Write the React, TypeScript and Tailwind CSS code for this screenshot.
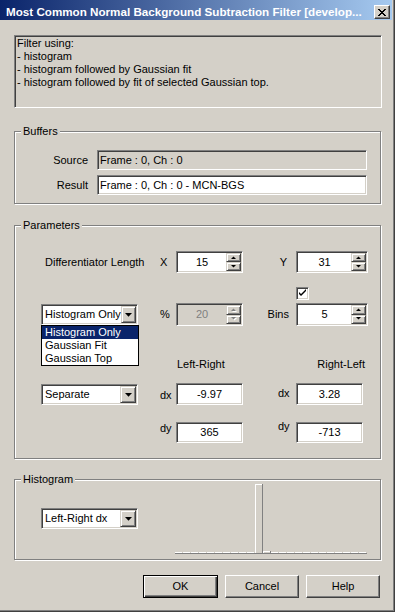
import React from "react";

const sunken =
  "border border-t-[#808080] border-l-[#808080] border-b-white border-r-white shadow-[inset_1px_1px_0_#404040,inset_-1px_-1px_0_#d4d0c8] p-[1px]";
const raisedBtn =
  "border border-t-white border-l-white border-b-[#404040] border-r-[#404040] shadow-[inset_-1px_-1px_0_#808080] bg-[#d4d0c8]";
const raisedSmall =
  "border border-t-[#d4d0c8] border-l-[#d4d0c8] border-b-[#404040] border-r-[#404040] shadow-[inset_1px_1px_0_#fff,inset_-1px_-1px_0_#808080] bg-[#d4d0c8]";

function Tri({ up, disabled }: { up?: boolean; disabled?: boolean }) {
  const d = up ? "M0 3 L5 3 L2.5 0.5 Z" : "M0 0 L5 0 L2.5 2.5 Z";
  return (
    <svg width="6" height="4" viewBox="0 0 6 4" className="block">
      {disabled && <path d={d} transform="translate(1 1)" fill="#ffffff" />}
      <path d={d} fill={disabled ? "#808080" : "#000000"} />
    </svg>
  );
}

function Spin({
  value,
  w,
  h,
  disabled,
}: {
  value: string;
  w: string;
  h: string;
  disabled?: boolean;
}) {
  return (
    <div className={`flex ${w} ${h} ${sunken} ${disabled ? "bg-[#d4d0c8]" : "bg-white"}`}>
      <div className={`flex flex-1 items-center justify-center ${disabled ? "text-[#808080]" : "text-black"}`}>
        {value}
      </div>
      <div className="flex w-[15px] flex-col">
        <div className={`flex flex-1 items-center justify-center ${raisedSmall}`}>
          <Tri up disabled={disabled} />
        </div>
        <div className={`flex flex-1 items-center justify-center ${raisedSmall}`}>
          <Tri disabled={disabled} />
        </div>
      </div>
    </div>
  );
}

function Edit({ value, h }: { value: string; h: string }) {
  return (
    <div className={`flex w-[67px] ${h} items-center justify-center bg-white ${sunken}`}>{value}</div>
  );
}

function Combo({ value }: { value: string }) {
  return (
    <div className={`flex h-[21px] w-[97px] bg-white ${sunken}`}>
      <div className="flex flex-1 items-center pl-[2px] whitespace-nowrap">{value}</div>
      <div className={`flex w-[16px] items-center justify-center ${raisedSmall}`}>
        <svg width="7" height="4" viewBox="0 0 7 4" className="block">
          <path d="M0 0 H7 L3.5 3.8 Z" fill="#000" />
        </svg>
      </div>
    </div>
  );
}

function Group({
  label,
  className,
  children,
}: {
  label: string;
  className: string;
  children?: React.ReactNode;
}) {
  return (
    <div
      className={`relative ml-[14px] w-[367px] shrink-0 border border-[#808080] shadow-[1px_1px_0_#fff,inset_1px_1px_0_#fff] ${className}`}
    >
      <span className="absolute left-[6px] top-[-7px] bg-[#d4d0c8] px-[2px] leading-[13px]">{label}</span>
      {children}
    </div>
  );
}

function Checkbox() {
  return (
    <div className={`h-[13px] w-[13px] bg-white ${sunken}`}>
      <svg width="9" height="9" viewBox="0 0 9 9" className="block">
        <path d="M1 3 V5 L3 7 L8 2 V0 L3 5 Z" fill="#000" />
      </svg>
    </div>
  );
}

function Chart() {
  const base = 69;
  const bars = Array.from({ length: 24 }, (_, i) => i);
  return (
    <svg width="193" height="71" viewBox="0 0 193 71" className="block" shapeRendering="crispEdges">
      {bars.map((i) => {
        const x0 = i * 8;
        const hgt = i === 10 ? 69 : i === 11 ? 2 : 0;
        const top = base - hgt;
        return (
          <g key={i}>
            <rect x={x0} y={hgt > 0 ? top : base - 1} width={7} height={1} fill="#ffffff" />
            {hgt > 0 && <rect x={x0} y={top} width={1} height={hgt} fill="#ffffff" />}
            {hgt > 0 && <rect x={x0 + 7} y={top} width={1} height={hgt + 1} fill="#808080" />}
          </g>
        );
      })}
      <rect x={0} y={base} width={192} height={1} fill="#808080" />
    </svg>
  );
}

export default function App() {
  return (
    <div className="flex h-[612px] w-[395px] flex-col overflow-hidden border-b border-r border-[#404040] bg-[#d4d0c8] font-['Liberation_Sans',Arial,sans-serif] text-[11px] leading-[13px] text-black shadow-[inset_-1px_-1px_0_#808080]">
      {/* Title bar */}
      <div className="flex h-[20px] w-[392px] shrink-0 items-start bg-[linear-gradient(to_right,#0a246a,#a6caf0)]">
        <div className="pl-[6px] pt-[5px] text-[11.65px] font-bold leading-[13px] whitespace-nowrap text-white">
          Most Common Normal Background Subtraction Filter [develop...
        </div>
        <div
          className={`ml-auto mr-[2px] mt-[5px] flex h-[14px] w-[16px] shrink-0 items-center justify-center ${raisedBtn}`}
        >
          <svg width="8" height="7" viewBox="0 0 8 7" className="block" shapeRendering="crispEdges">
            <path
              d="M0 0h2v1h-2zM6 0h2v1h-2zM1 1h2v1h-2zM5 1h2v1h-2zM2 2h4v1h-4zM3 3h2v1h-2zM2 4h4v1h-4zM1 5h2v1h-2zM5 5h2v1h-2zM0 6h2v1h-2zM6 6h2v1h-2z"
              fill="#000"
            />
          </svg>
        </div>
      </div>

      {/* Description */}
      <div className={`ml-[14px] mt-[15px] h-[73px] w-[368px] shrink-0 bg-[#d4d0c8] ${sunken}`}>
        <div className="pl-[1px] leading-[13px]">
          <div>Filter using:</div>
          <div>- histogram</div>
          <div>- histogram followed by Gaussian fit</div>
          <div>- histogram followed by fit of selected Gaussian top.</div>
        </div>
      </div>

      {/* Buffers */}
      <Group label="Buffers" className="mt-[23px] h-[73px]">
        <div className="mt-[18px] flex h-[20px] items-center">
          <div className="w-[74px] pr-[1px] text-right">Source</div>
          <div className={`ml-[8px] flex h-[20px] w-[270px] items-center bg-[#d4d0c8] pl-[2px] ${sunken}`}>
            Frame : 0, Ch : 0
          </div>
        </div>
        <div className="mt-[5px] flex h-[20px] items-center">
          <div className="w-[74px] pr-[1px] text-right">Result</div>
          <div className={`ml-[8px] flex h-[20px] w-[270px] items-center bg-white pl-[2px] ${sunken}`}>
            Frame : 0, Ch : 0 - MCN-BGS
          </div>
        </div>
      </Group>

      {/* Parameters */}
      <Group label="Parameters" className="mt-[21px] h-[234px]">
        <div className="pl-[26px]">
          <div className="mt-[25px] flex h-[22px] items-center">
            <div className="w-[97px] pl-[4px] whitespace-nowrap">Differentiator Length</div>
            <div className="w-[21px]" />
            <div className="w-[17px] pl-[1px]">X</div>
            <Spin value="15" w="w-[67px]" h="h-[22px]" />
            <div className="w-[53px] pr-[9px] text-right">Y</div>
            <Spin value="31" w="w-[72px]" h="h-[22px]" />
          </div>

          <div className="mt-[14px] flex h-[13px]">
            <div className="ml-[255px]">
              <Checkbox />
            </div>
          </div>

          <div className="mt-[3px] flex h-[23px] items-center">
            <div className="relative w-[97px]">
              <Combo value="Histogram Only" />
              <div className="absolute left-0 top-full z-10 w-[98px] border border-black bg-white">
                <div className="h-[13px] bg-[#0a246a] pl-[3px] leading-[13px] text-white">Histogram Only</div>
                <div className="h-[13px] pl-[3px] leading-[13px]">Gaussian Fit</div>
                <div className="h-[13px] pl-[3px] leading-[13px]">Gaussian Top</div>
              </div>
            </div>
            <div className="w-[21px]" />
            <div className="w-[17px] pl-[1px]">%</div>
            <Spin value="20" w="w-[67px]" h="h-[23px]" disabled />
            <div className="w-[53px] pr-[7px] text-right">Bins</div>
            <Spin value="5" w="w-[72px]" h="h-[23px]" />
          </div>

          <div className="mt-[32px] flex h-[13px]">
            <div className="w-[97px]" />
            <div className="w-[21px]" />
            <div className="w-[17px]" />
            <div className="w-[67px] pl-[1px] whitespace-nowrap">Left-Right</div>
            <div className="w-[53px]" />
            <div className="w-[72px] pr-[3px] text-right whitespace-nowrap">Right-Left</div>
          </div>

          <div className="mt-[12px] flex h-[22px] items-start">
            <div className="mt-[1px] w-[97px]">
              <Combo value="Separate" />
            </div>
            <div className="w-[21px]" />
            <div className="mt-[6px] w-[17px] pl-[1px]">dx</div>
            <Edit value="-9.97" h="h-[22px]" />
            <div className="mt-[4px] w-[53px] pl-[35px]">dx</div>
            <Edit value="3.28" h="h-[22px]" />
          </div>

          <div className="mt-[17px] flex h-[21px] items-start">
            <div className="w-[97px]" />
            <div className="w-[21px]" />
            <div className="mt-[0px] w-[17px] pl-[1px]">dy</div>
            <Edit value="365" h="h-[21px]" />
            <div className="mt-[-2px] w-[53px] pl-[35px]">dy</div>
            <Edit value="-713" h="h-[21px]" />
          </div>
        </div>
      </Group>

      {/* Histogram */}
      <Group label="Histogram" className="mt-[20px] h-[81px]">
        <div className="flex items-start pl-[26px]">
          <div className="mt-[28px]">
            <Combo value="Left-Right dx" />
          </div>
          <div className="ml-[37px] mt-[4px]">
            <Chart />
          </div>
        </div>
      </Group>

      {/* Buttons */}
      <div className="ml-[143px] mt-[15px] flex shrink-0 gap-[7px]">
        <div className="flex h-[23px] w-[75px] items-center justify-center border border-black bg-[#d4d0c8] shadow-[inset_1px_1px_0_#fff,inset_-1px_-1px_0_#404040,inset_-2px_-2px_0_#808080]">
          OK
        </div>
        <div className={`flex h-[23px] w-[74px] items-center justify-center ${raisedBtn}`}>Cancel</div>
        <div className={`flex h-[23px] w-[74px] items-center justify-center ${raisedBtn}`}>Help</div>
      </div>
    </div>
  );
}
